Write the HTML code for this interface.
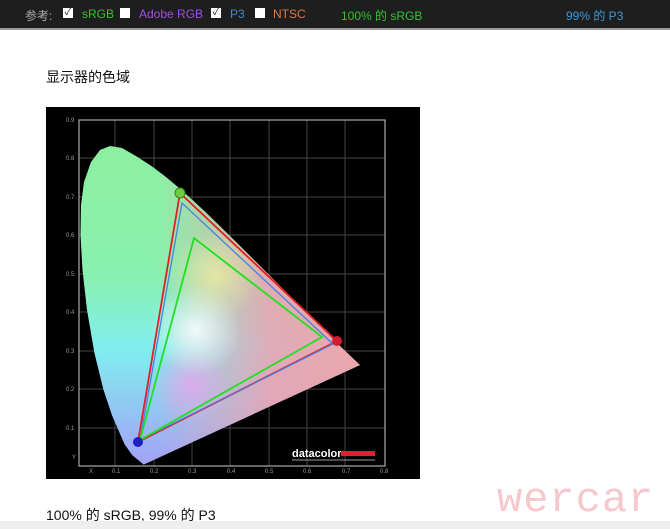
<!DOCTYPE html><html><head><meta charset="utf-8"><style>
body{margin:0;width:670px;height:529px;background:#fff;position:relative;overflow:hidden;font-family:"Liberation Sans","Noto Sans CJK SC",sans-serif}
.bar{position:absolute;left:0;top:0;width:670px;height:28px;background:#1e1e1e;border-bottom:2px solid #9a9a9a;font-size:12px}
.bar span{position:absolute;top:7px;white-space:nowrap}
.cb{position:absolute;top:8px;width:10px;height:10px;background:#fff;font-size:10px;line-height:10px;color:#222;text-align:center}
.t{position:absolute;font-size:14px;color:#111}
</style></head><body>
<div class="bar">
<span style="left:25px;color:#aaa">参考:</span>
<div class="cb" style="left:63px">✓</div><span style="left:82px;color:#2ec52e">sRGB</span>
<div class="cb" style="left:120px"></div><span style="left:139px;color:#a050e0">Adobe RGB</span>
<div class="cb" style="left:211px">✓</div><span style="left:230px;color:#3a8ad0">P3</span>
<div class="cb" style="left:255px"></div><span style="left:273px;color:#e07a40">NTSC</span>
<span style="left:341px;color:#2ec52e">100% 的 sRGB</span>
<span style="left:566px;color:#3a9ae0">99% 的 P3</span>
</div>
<div class="t" style="left:46px;top:67px">显示器的色域</div>
<svg style="position:absolute;left:46px;top:107px" width="374" height="372" viewBox="46 107 374 372">
<defs>
<clipPath id="c"><path d="M143.7,464.6 L132.2,455.1 L124.5,444.2 L112,415.4 L103.3,389.2 L94.4,352.9 L87,310 L82.5,270 L80.5,235 L81,205 L84,182 L91,162 L100,150 L110,146 L122,148 L136.3,156.2 L150.9,165.6 L164.9,176.1 L178.8,187.7 L192.5,200 L206.2,212.8 L219.9,226.1 L233.5,239.5 L247.1,253 L260.4,266.2 L273.3,279.2 L285.7,291.6 L297.3,303.2 L307.9,313.8 L317.1,323.1 L325.3,331.2 L332,337.9 L341.8,347.8 L360,365 Z"/></clipPath>
<linearGradient id="g1" x1="0" y1="0" x2="0" y2="1"><stop offset="0" stop-color="#8cf09a"/><stop offset="0.45" stop-color="#8af0b0"/><stop offset="0.65" stop-color="#80eeee"/><stop offset="1" stop-color="#a898f8"/></linearGradient>
<linearGradient id="g2" x1="0" y1="0" x2="1" y2="0"><stop offset="0.3" stop-color="#f0a0b0" stop-opacity="0"/><stop offset="0.6" stop-color="#f0a0b0" stop-opacity="0.85"/><stop offset="1" stop-color="#f0a4a0"/></linearGradient>
<radialGradient id="g3" cx="196" cy="330" r="45" gradientUnits="userSpaceOnUse"><stop offset="0" stop-color="#fff" stop-opacity="0.85"/><stop offset="1" stop-color="#fff" stop-opacity="0"/></radialGradient>
<radialGradient id="g4" cx="215" cy="275" r="45" gradientUnits="userSpaceOnUse"><stop offset="0" stop-color="#f8f0a0" stop-opacity="0.7"/><stop offset="1" stop-color="#f8f0a0" stop-opacity="0"/></radialGradient>
<radialGradient id="g5" cx="190" cy="385" r="40" gradientUnits="userSpaceOnUse"><stop offset="0" stop-color="#f0a0f0" stop-opacity="0.7"/><stop offset="1" stop-color="#f0a0f0" stop-opacity="0"/></radialGradient>
</defs>
<rect x="46" y="107" width="374" height="372" fill="#000"/>
<g stroke="#444" stroke-width="1">
<path d="M115,120V466M154,120V466M192,120V466M230,120V466M269,120V466M307,120V466M345,120V466"/>
<path d="M79,158H385M79,197H385M79,235H385M79,274H385M79,312H385M79,351H385M79,389H385M79,428H385"/>
</g>
<rect x="79" y="120" width="306" height="346" fill="none" stroke="#aaa" stroke-width="1.2"/>
<g clip-path="url(#c)"><rect x="46" y="107" width="374" height="372" fill="url(#g1)"/><rect x="46" y="107" width="374" height="372" fill="url(#g2)"/><rect x="46" y="107" width="374" height="372" fill="url(#g5)"/><rect x="46" y="107" width="374" height="372" fill="url(#g4)"/><rect x="46" y="107" width="374" height="372" fill="url(#g3)"/></g>
<g fill="none" stroke-width="1.8">
<path d="M337,341 L180,193 L138,442 Z" stroke="#e02020"/>
<path d="M333,344 L182,203 L140,440 Z" stroke="#4a80e0" stroke-width="1.3"/>
<path d="M322,337 L194,238 L140,440 Z" stroke="#20e020"/>
</g>
<circle cx="180" cy="193" r="5" fill="#6ad040" stroke="#3a8020"/>
<circle cx="337" cy="341" r="5" fill="#d02030"/>
<circle cx="138" cy="442" r="5" fill="#2020c0"/>
<text x="292" y="457" fill="#fff" font-size="11" font-weight="bold" font-family="Liberation Sans">datacolor</text>
<rect x="341" y="451" width="34" height="5" fill="#e02030"/>
<line x1="292" y1="460" x2="375" y2="460" stroke="#ccc" stroke-width="0.8"/>
<g fill="#999" font-size="6" font-family="Liberation Sans">
<text x="66" y="122">0.9</text><text x="66" y="160">0.8</text><text x="66" y="199">0.7</text><text x="66" y="237">0.6</text><text x="66" y="276">0.5</text><text x="66" y="314">0.4</text><text x="66" y="353">0.3</text><text x="66" y="391">0.2</text><text x="66" y="430">0.1</text><text x="72" y="459">Y</text>
<text x="89" y="473">X</text><text x="112" y="473">0.1</text><text x="150" y="473">0.2</text><text x="188" y="473">0.3</text><text x="227" y="473">0.4</text><text x="265" y="473">0.5</text><text x="303" y="473">0.6</text><text x="342" y="473">0.7</text><text x="380" y="473">0.8</text>
</g>
</svg>
<div class="t" style="left:46px;top:505px">100% 的 sRGB, 99% 的 P3</div>
<div style="position:absolute;left:497px;top:476px;font-family:'Liberation Mono',monospace;font-size:42px;color:#f6c8cc;letter-spacing:1px">wercar</div>
<div style="position:absolute;left:0;top:521px;width:670px;height:8px;background:#eee"></div>
</body></html>
